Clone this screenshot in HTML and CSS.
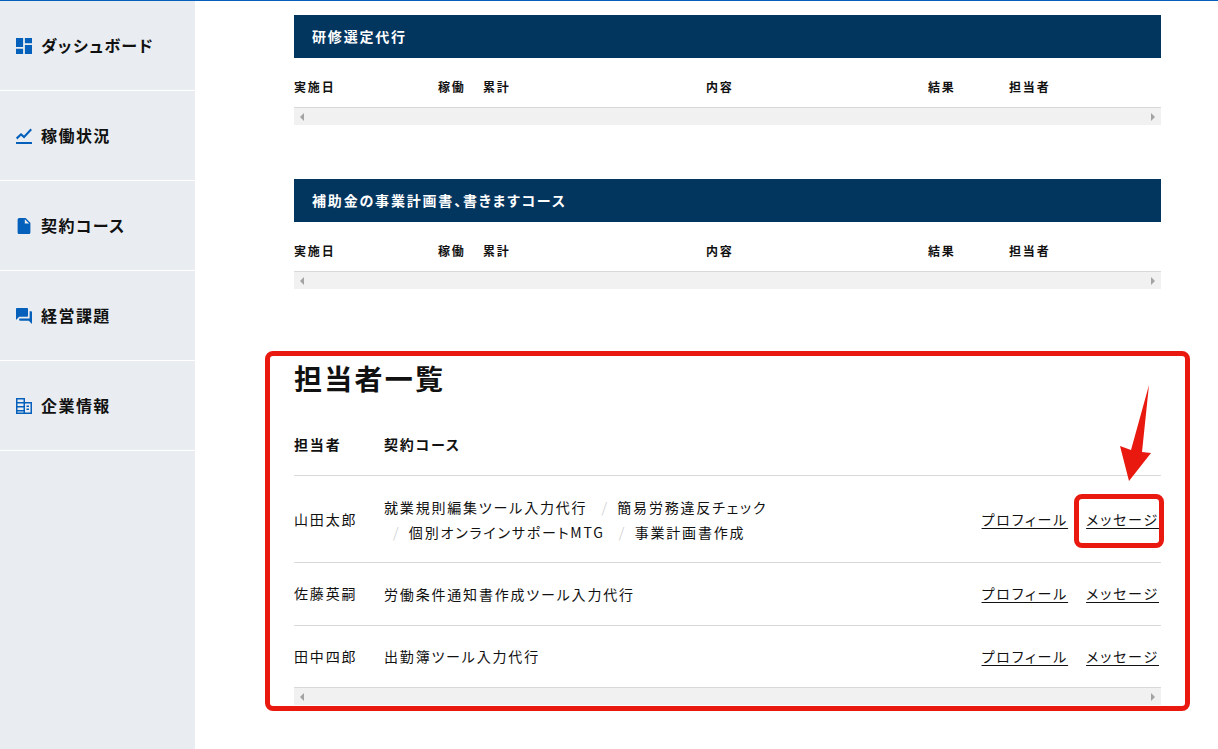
FILE: index.html
```html
<!DOCTYPE html>
<html lang="ja">
<head>
<meta charset="utf-8">
<title>担当者一覧</title>
<link rel="stylesheet" href="styles.css">
</head>
<body>
<div class="app">
  <nav class="sidebar">
    <a class="nav-item"><svg class="nav-icon" viewBox="3 3 18 18"><path d="M3 13h8V3H3v10zm0 8h8v-6H3v6zm10 0h8V11h-8v10zm0-18v6h8V3h-8z"/></svg>ダッシュボード</a>
    <a class="nav-item"><svg class="nav-icon" viewBox="0 0 16 16"><path d="M0 14h16v2H0z"/><path d="M0 9.500 5 5l3 2.600L14.500.5 16 2 8.100 10.500 5 7.800 1.300 11.500z"/></svg>稼働状況</a>
    <a class="nav-item"><svg class="nav-icon" viewBox="2 2 20 20"><path d="M6 2c-1.100 0-1.990.9-1.990 2L4 20c0 1.100.89 2 1.990 2H18c1.100 0 2-.9 2-2V8l-6-6H6zm7 7V3.500L18.500 9H13z"/></svg>契約コース</a>
    <a class="nav-item"><svg class="nav-icon" viewBox="2 2 20 20"><path d="M21 6h-2v9H6v2c0 .55.45 1 1 1h11l4 4V7c0-.55-.45-1-1-1zm-4 6V3c0-.55-.45-1-1-1H3c-.55 0-1 .45-1 1v14l4-4h10c.55 0 1-.45 1-1z"/></svg>経営課題</a>
    <a class="nav-item"><svg class="nav-icon" viewBox="0 0 16 16"><path fill-rule="evenodd" d="M0 0h9v4h7v12H0zM1.500 1.500V4H7.500V1.500zM1.500 5.500V8H7.500V5.500zM1.500 9.500V12H7.500V9.500zM1.500 13.500V14.500H7.500V13.500zM9 5.500V14.500H14.500V5.500zM10.500 7.500H13V9H10.500zM10.500 10.500H13V12H10.500z"/></svg>企業情報</a>
  </nav>
  <main class="main">
    <section class="record">
      <h2 class="record-title">研修選定代行</h2>
      <div class="record-head"><span>実施日</span><span>稼働</span><span>累計</span><span>内容</span><span>結果</span><span>担当者</span></div>
      <div class="scrollbar"><i class="arrow arrow-left"></i><i class="arrow arrow-right"></i></div>
    </section>
    <section class="record">
      <h2 class="record-title">補助金の事業計画書、書きますコース</h2>
      <div class="record-head"><span>実施日</span><span>稼働</span><span>累計</span><span>内容</span><span>結果</span><span>担当者</span></div>
      <div class="scrollbar"><i class="arrow arrow-left"></i><i class="arrow arrow-right"></i></div>
    </section>
    <section class="staff">
      <h1 class="staff-title">担当者一覧</h1>
      <div class="staff-row staff-head"><span>担当者</span><span>契約コース</span></div>
      <div class="staff-row staff-tall">
        <span>山田太郎</span>
        <ul class="courses">
          <li>就業規則編集ツール入力代行</li>
          <li>簡易労務違反チェック</li>
          <li>個別オンラインサポートMTG</li>
          <li>事業計画書作成</li>
        </ul>
        <span class="links"><a>プロフィール</a><a>メッセージ</a></span>
      </div>
      <div class="staff-row staff-plain">
        <span>佐藤英嗣</span>
        <ul class="courses"><li>労働条件通知書作成ツール入力代行</li></ul>
        <span class="links"><a>プロフィール</a><a>メッセージ</a></span>
      </div>
      <div class="staff-row staff-plain staff-last">
        <span>田中四郎</span>
        <ul class="courses"><li>出勤簿ツール入力代行</li></ul>
        <span class="links"><a>プロフィール</a><a>メッセージ</a></span>
      </div>
      <div class="scrollbar"><i class="arrow arrow-left"></i><i class="arrow arrow-right"></i></div>
    </section>
  </main>
  <div class="mark mark-large"></div>
  <div class="mark mark-small"></div>
  <svg class="mark-arrow" viewBox="0 0 32 96"><polygon points="29,0 22,67 31,68 9,96 0,61 11,65"/></svg>
</div>
</body>
</html>
```
FILE: styles.css
```css
* { box-sizing: border-box; }
html, body { margin: 0; height: 100%; overflow: hidden; }
body {
  font-family: "Noto Sans CJK JP", "Noto Sans", sans-serif;
  color: #111;
  background: #fff;
  font-feature-settings: "palt";
}
.app {
  position: relative;
  display: flex;
  height: 749px;
  border-top: 1px solid #0560bb;
}
.sidebar {
  width: 195px;
  flex: none;
  background: #e9edf1;
}
.nav-item {
  display: flex;
  align-items: center;
  gap: 9px;
  height: 90px;
  padding: 0 0 1px 16px;
  border-bottom: 1px solid #fff;
  font-size: 16px;
  font-weight: 700;
  letter-spacing: .09em;
  color: #111;
}
.nav-icon { width: 16px; height: 16px; margin-top: 1px; fill: #0560bb; flex: none; }
.main {
  flex: none;
  width: 966px;
  padding: 14px 0 0 99px;
}
.record { margin-bottom: 54px; }
.record-title {
  margin: 0;
  height: 43px;
  padding-left: 18px;
  background: #03365f;
  color: #fff;
  font-size: 14px;
  font-weight: 700;
  line-height: 43px;
  letter-spacing: .13em;
}
.record-head {
  display: grid;
  grid-template-columns: 144px 45px 223px 222px 81px 1fr;
  align-items: center;
  height: 50px;
  padding-top: 8px;
  border-bottom: 1px solid #d9d9d9;
  font-size: 12px;
  font-weight: 700;
  letter-spacing: .155em;
}
.scrollbar {
  position: relative;
  height: 17px;
  background: #f1f1f1;
}
.arrow {
  position: absolute;
  top: 5px;
  border-style: solid;
  border-width: 4px 0 4px 4px;
  border-color: transparent transparent transparent #a3a3a3;
}
.arrow-left { left: 6px; transform: scaleX(-1); }
.arrow-right { right: 6px; }
.staff { margin-top: 69px; }
.staff-title {
  margin: 0;
  font-size: 28px;
  line-height: 40px;
  font-weight: 700;
  letter-spacing: .08em;
  height: 41px;
}
.staff-row {
  display: flex;
  align-items: center;
  min-height: 63px;
  border-bottom: 1px solid #d9d9d9;
  font-size: 14px;
  letter-spacing: .13em;
}
.staff-row > span:first-child { width: 90px; flex: none; }
.staff-head {
  height: 77px;
  font-weight: 700;
  padding-top: 14px;
}
.staff-tall { height: 87px; }
.staff-plain { padding-bottom: 2px; }
.staff-last { min-height: 62px; }
.courses {
  flex: 1;
  margin: 0;
  padding: 2px 40px 0 0;
  list-style: none;
  line-height: 25px;
}
.courses li { display: inline-block; white-space: nowrap; }
.courses li + li::before {
  content: "/";
  color: #c8c8c8;
  margin: 0 8.5px 0 9px;
  font-weight: 300;
}
.links { display: flex; gap: 18px; padding-right: 2px; }
.links a { text-decoration: underline; text-underline-offset: 3px; color: #111; }
.mark {
  position: absolute;
  border: 5px solid #e9190f;
  border-radius: 8px;
}
.mark-large { left: 265px; top: 350px; width: 925px; height: 360px; }
.mark-small { left: 1074px; top: 493px; width: 90px; height: 54px; }
.mark-arrow { position: absolute; left: 1120px; top: 384px; width: 32px; height: 96px; fill: #e9190f; }
```
